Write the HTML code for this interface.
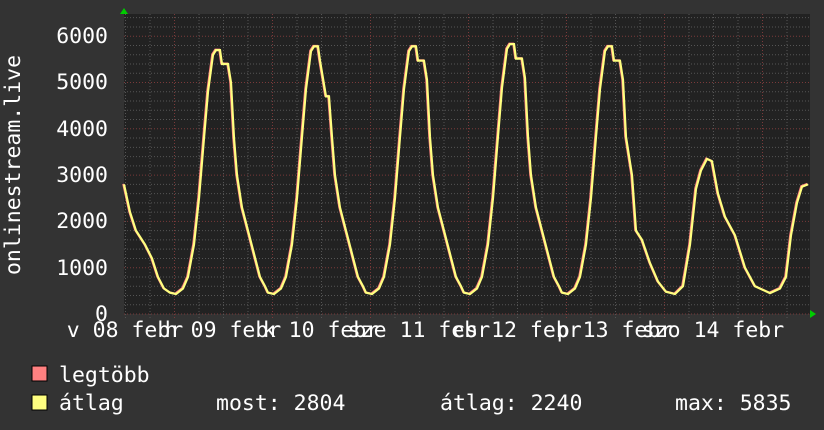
<!DOCTYPE html>
<html><head><meta charset="utf-8"><style>
html,body{margin:0;padding:0;background:#333;}
svg{display:block}
text{font-family:"DejaVu Sans Mono","Liberation Mono",monospace;fill:#fff;font-size:21.5px}
</style></head><body>
<svg id="g" width="824" height="430" xmlns="http://www.w3.org/2000/svg">
<rect width="824" height="430" fill="#333"/>
<rect x="124" y="14" width="686" height="300" fill="#222"/>
<g id="grid"></g>
<polyline id="red" fill="none" stroke="#ff8080" stroke-width="2" points=""/>
<polyline id="yel" fill="none" stroke="#ffff80" stroke-width="2.2" points=""/>
<polygon points="120,14 128,14 124,8" fill="#0c0"/>
<polygon points="810,310 810,318 816,314" fill="#0c0"/>
<text x="108" y="43" text-anchor="end">6000</text>
<text x="108" y="89" text-anchor="end">5000</text>
<text x="108" y="136" text-anchor="end">4000</text>
<text x="108" y="182" text-anchor="end">3000</text>
<text x="108" y="228" text-anchor="end">2000</text>
<text x="108" y="275" text-anchor="end">1000</text>
<text x="108" y="321" text-anchor="end">0</text>
<text transform="translate(20,165) rotate(-90)" text-anchor="middle">onlinestream.live</text>
<g text-anchor="middle">
<text x="125" y="337">v 08 febr</text>
<text x="223" y="337">h 09 febr</text>
<text x="321" y="337">k 10 febr</text>
<text x="419" y="337">sze 11 febr</text>
<text x="517" y="337">cs 12 febr</text>
<text x="615" y="337">p 13 febr</text>
<text x="713" y="337">szo 14 febr</text>
</g>
<rect x="32" y="366" width="15" height="15" fill="#ff8080" stroke="#000"/>
<rect x="32" y="395" width="15" height="15" fill="#ffff80" stroke="#000"/>
<text x="59" y="382">legtöbb</text>
<text x="59" y="410">átlag</text>
<text x="216" y="410">most: 2804</text>
<text x="440" y="410">átlag: 2240</text>
<text x="675" y="410">max: 5835</text>
</svg>
<script>
var g=document.getElementById("grid"),h="";
function Y(v){return 314-v*0.0463;}
for(var v=0;v<=6400;v+=200){var y=Y(v);if(y<14)break;var maj=v%1000==0;
h+='<line x1="124" x2="810" y1="'+y+'" y2="'+y+'" stroke="'+(maj?'#7a3a3a':'#555')+'" stroke-dasharray="1,2"/>';}
for(var x=125.5;x<810;x+=24.5){var d=Math.abs(((x-174)%98+98)%98)<1;
h+='<line y1="14" y2="318" x1="'+x+'" x2="'+x+'" stroke="'+(d?'#7a3a3a':'#555')+'" stroke-dasharray="1,2"/>';}
g.innerHTML=h;
var cyc=[[0,460],[6,430],[13,550],[18,800],[24,1500],[29,2500],[34,3800],[38,4800],[43,5600],[46,5700],[50,5700],[52,5400],[58,5400],[61,5000],[64,3800],[67,3000],[72,2300],[78,1800],[84,1300],[90,800],[95,600]];
var pk=[5700,5780,5780,5830,5780];
var pts=[[124,2800],[130,2200],[136,1800],[145,1500],[152,1200],[158,800],[164,550]];
for(var k=0;k<5;k++){var D=170+98*k;
cyc.forEach(function(p){if(k==4&&p[0]>64)return;var v=p[1];if(v>3000)v=3000+(v-3000)*((pk[k]-3000)/2700);pts.push([D+p[0],v]);});}
pts=pts.concat([[632,3000],[636,1800],[642,1600],[650,1100],[658,700],[666,480],[675,430],[683,600],[690,1500],[696,2700],[701,3100],[707,3350],[712,3300],[718,2600],[725,2100],[735,1700],[745,1000],[755,600],[770,450],[780,550],[786,800],[791,1700],[797,2400],[802,2750],[808,2800]]);
pts=pts.map(function(p){if(p[0]>=326&&p[0]<=331)return [p[0],4700];return p;});
pts.sort(function(a,b){return a[0]-b[0]});
var s1="",s2="";pts.forEach(function(p){s1+=p[0]+","+Y(p[1])+" ";s2+=(p[0]-0.8)+","+(Y(p[1])-0.5)+" ";});
document.getElementById("red").setAttribute("points",s2);
document.getElementById("yel").setAttribute("points",s1);
</script>
</body></html>
